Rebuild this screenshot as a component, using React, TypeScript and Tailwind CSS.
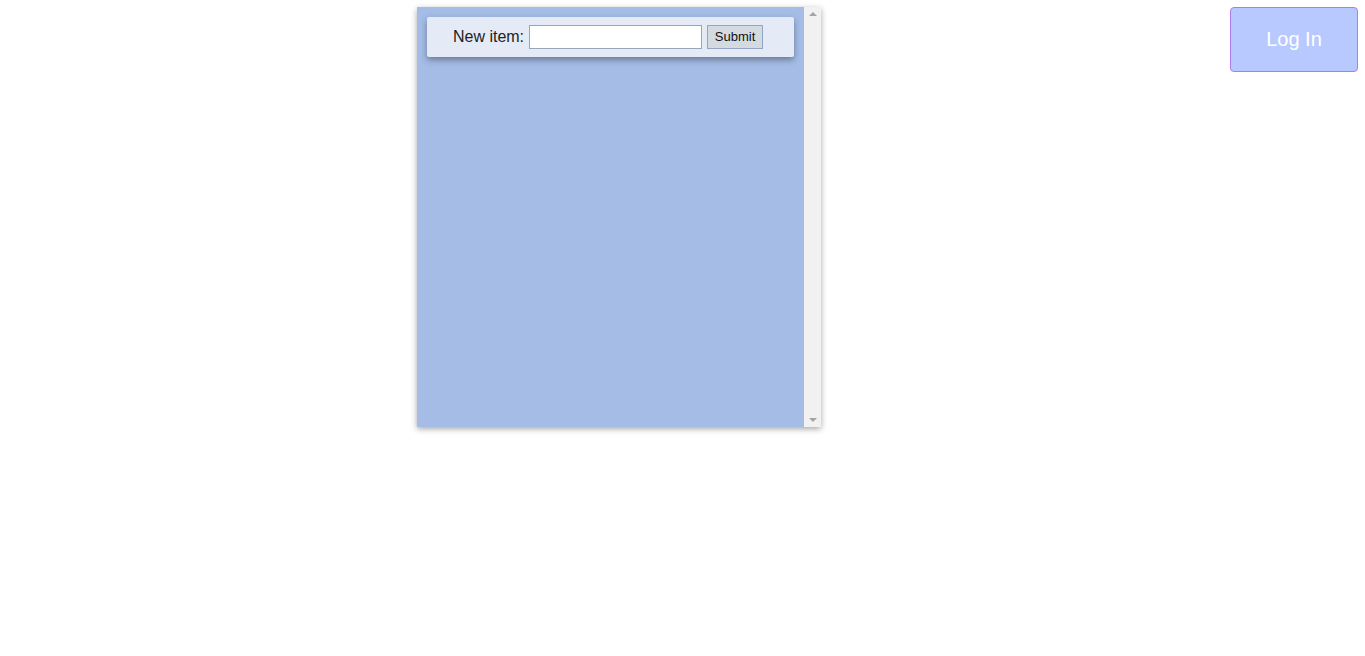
export default function App() {
  return (
    <div className="flex items-start bg-white min-h-[656px] font-['Liberation_Sans',Arial,sans-serif]">
      <div className="ml-[417px] mt-[7px] flex h-[420px] w-[404px] bg-[#a4bce6] shadow-[0_2px_6px_rgba(0,0,0,0.35)]">
        <div className="flex-1 p-[10px]">
          <form
            onSubmit={(e) => e.preventDefault()}
            className="flex h-[40px] items-center justify-center gap-[5px] rounded-[2px] bg-[#e4ebf6] pr-[5px] shadow-[0_3px_6px_rgba(0,0,0,0.35)]"
          >
            <label className="text-[16px] text-[#222]">New item:</label>
            <input
              type="text"
              className="h-[24px] w-[173px] border border-[#9aa5b8] bg-white px-1 text-[13px] outline-none"
            />
            <button
              type="submit"
              className="h-[24px] w-[56px] border border-[#95a5c4] bg-[#d4dbe0] text-[13px] text-[#111]"
            >
              Submit
            </button>
          </form>
        </div>
        {/* scrollbar */}
        <div className="flex w-[17px] flex-col items-center justify-between bg-[#f1f1f1] py-[5px]">
          <div className="h-0 w-0 border-x-[4px] border-b-[4px] border-x-transparent border-b-[#a3a3a3]" />
          <div className="h-0 w-0 border-x-[4px] border-t-[4px] border-x-transparent border-t-[#a3a3a3]" />
        </div>
      </div>
      <button className="ml-auto mr-[7px] mt-[7px] h-[65px] w-[128px] rounded-[4px] border border-[#b07af0] bg-[#b8c9ff] pb-[2px] text-[20px] text-white">
        Log In
      </button>
    </div>
  );
}
